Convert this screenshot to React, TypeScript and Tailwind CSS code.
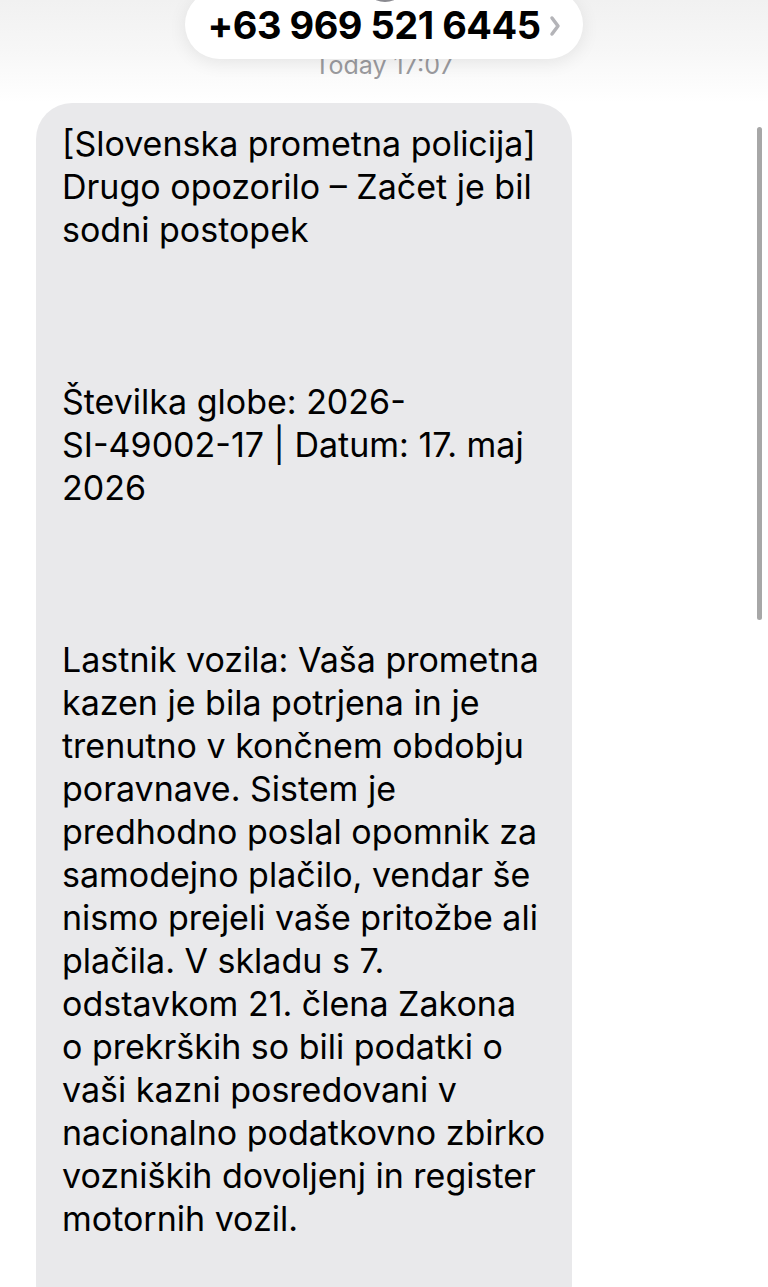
import React from "react";

const paragraphs: string[][] = [
  ["[Slovenska prometna policija]", "Drugo opozorilo – Začet je bil", "sodni postopek"],
  ["", "", ""],
  ["Številka globe: 2026-", "SI-49002-17 | Datum: 17. maj", "2026"],
  ["", "", ""],
  [
    "Lastnik vozila: Vaša prometna",
    "kazen je bila potrjena in je",
    "trenutno v končnem obdobju",
    "poravnave. Sistem je",
    "predhodno poslal opomnik za",
    "samodejno plačilo, vendar še",
    "nismo prejeli vaše pritožbe ali",
    "plačila. V skladu s 7.",
    "odstavkom 21. člena Zakona",
    "o prekrških so bili podatki o",
    "vaši kazni posredovani v",
    "nacionalno podatkovno zbirko",
    "vozniških dovoljenj in register",
    "motornih vozil.",
  ],
];

export default function App() {
  const lines = paragraphs.flat();
  return (
    <div
      className="relative w-[768px] h-[1287px] overflow-hidden bg-white"
      style={{ fontFamily: "Inter, 'Noto Sans', sans-serif" }}
    >
      {/* header gradient */}
      <div className="bg-gradient-to-b from-[#f1f1f1] via-[#f7f7f7] to-white pt-[53px] pb-[25px] flex justify-center">
        <div className="text-[25px] leading-[25px] text-[#9a9a9e]">Today 17:07</div>
      </div>

      {/* message bubble */}
      <div className="pl-[36px]">
        <div className="w-[536px] rounded-[36px] bg-[#e9e9eb] pl-[26px] pr-[16px] pt-[19px] pb-[80px] text-[34px] leading-[43px] text-black">
          {lines.map((l, i) => (
            <div key={i} className="whitespace-nowrap h-[43px]">
              {l}
            </div>
          ))}
        </div>
      </div>

      {/* contact pill overlay */}
      <div className="absolute left-[185px] top-[-10px] w-[398px] h-[69px] rounded-full bg-white shadow-[0_4px_18px_rgba(0,0,0,0.08)] flex items-end justify-center pb-[13px]">
        <span className="text-[38px] leading-[42px] font-bold text-black tracking-[-0.5px]">+63 969 521 6445</span>
        <svg className="ml-[8px] mb-[9px]" width="12" height="22" viewBox="0 0 12 22">
          <path d="M3 3 L9 11 L3 19" fill="none" stroke="#b4b4b8" strokeWidth="3.5" strokeLinecap="round" strokeLinejoin="round" />
        </svg>
      </div>
      {/* avatar sliver */}
      <div className="absolute left-[362px] top-[-44px] w-[46px] h-[46px] rounded-full bg-[#8a8a90]" />

      {/* scrollbar */}
      <div className="absolute right-[6px] top-[127px] w-[5px] h-[493px] rounded-full bg-[#a7a7a7]" />
    </div>
  );
}
